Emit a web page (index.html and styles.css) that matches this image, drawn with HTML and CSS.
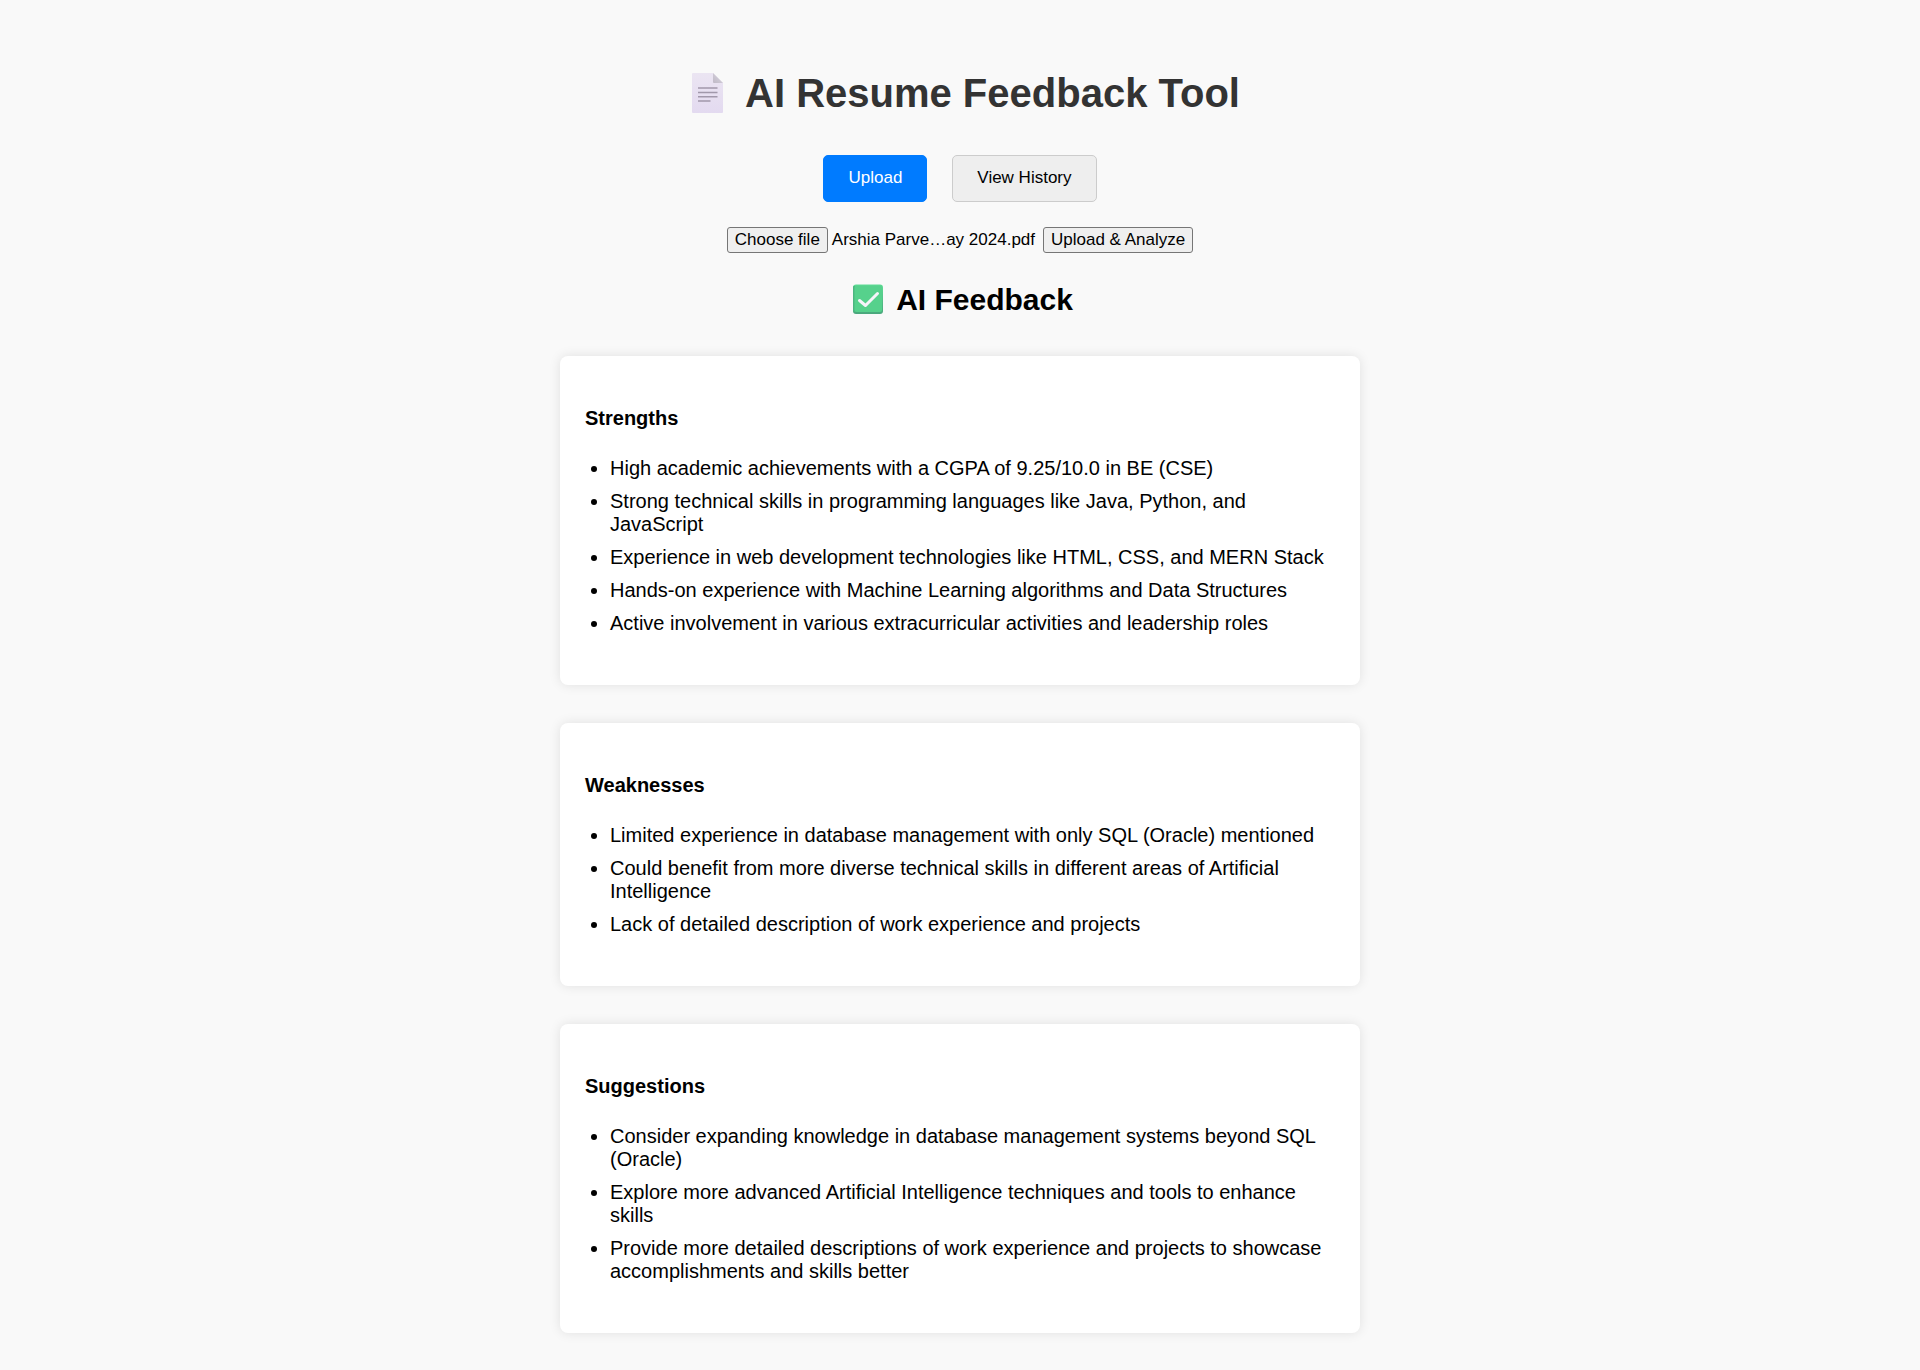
FILE: index.html
```html
<!DOCTYPE html>
<html lang="en">
<head>
  <meta charset="utf-8">
  <meta name="viewport" content="width=device-width, initial-scale=1">
  <title>AI Resume Feedback Tool</title>
  <link rel="stylesheet" href="styles.css">
</head>
<body>
  <main class="page">
    <h1 class="title">
      <svg class="title-icon" viewBox="0 0 55 40" aria-hidden="true">
        <defs>
          <linearGradient id="paper" x1="0" y1="0" x2="0" y2="1">
            <stop offset="0" stop-color="#ebe5f2"/>
            <stop offset="1" stop-color="#e3daf0"/>
          </linearGradient>
          <linearGradient id="fold" x1="0" y1="1" x2="1" y2="0">
            <stop offset="0" stop-color="#bfb9c6"/>
            <stop offset="1" stop-color="#dcd7e2"/>
          </linearGradient>
        </defs>
        <path d="M13 0H33L43 10V39a1 1 0 0 1-1 1H13a1 1 0 0 1-1-1V1a1 1 0 0 1 1-1Z" fill="url(#paper)"/>
        <path d="M33 0L43 10H34a1 1 0 0 1-1-1Z" fill="url(#fold)"/>
        <path d="M18 15H37.500M18 19.500H37.500M18 23.800H37.500M18 28H30.500" stroke="#a198ab" stroke-width="1.500" fill="none"/>
      </svg>
      AI Resume Feedback Tool
    </h1>

    <nav class="tabs">
      <button class="tab tab-active" type="button">Upload</button>
      <button class="tab" type="button">View History</button>
    </nav>

    <form class="upload">
      <input class="file-input" id="resume" type="file" accept=".pdf" aria-label="Resume" tabindex="-1">
      <button class="control" type="button" onclick="document.getElementById('resume').click()">Choose file</button>
      <span class="file-name">Arshia Parve…ay 2024.pdf</span>
      <button class="control" type="button">Upload &amp; Analyze</button>
    </form>

    <h2 class="subtitle">
      <svg class="subtitle-icon" viewBox="0 0 41 32" aria-hidden="true">
        <defs>
          <linearGradient id="tick-edge" x1="0" y1="0" x2="0" y2="1">
            <stop offset="0" stop-color="#5fdd95"/>
            <stop offset="1" stop-color="#4aa77c"/>
          </linearGradient>
        </defs>
        <rect x="6" y="0.500" width="30" height="29.500" rx="3" fill="url(#tick-edge)"/>
        <rect x="6" y="2" width="3" height="26" rx="1" fill="#4cb681"/>
        <rect x="7.500" y="1.500" width="27.500" height="26.500" rx="2" fill="#56d18c"/>
        <path d="M12.500 16.500L18.500 21.500L30.500 9.500" fill="none" stroke="#f6f4fa" stroke-width="3" stroke-linecap="round" stroke-linejoin="round"/>
      </svg>
      AI Feedback
    </h2>

    <div class="cards">
      <section class="card">
        <h4 class="card-title">Strengths</h4>
        <ul class="points">
          <li>High academic achievements with a CGPA of 9.25/10.0 in BE (CSE)</li>
          <li>Strong technical skills in programming languages like Java, Python, and JavaScript</li>
          <li>Experience in web development technologies like HTML, CSS, and MERN Stack</li>
          <li>Hands-on experience with Machine Learning algorithms and Data Structures</li>
          <li>Active involvement in various extracurricular activities and leadership roles</li>
        </ul>
      </section>

      <section class="card">
        <h4 class="card-title">Weaknesses</h4>
        <ul class="points">
          <li>Limited experience in database management with only SQL (Oracle) mentioned</li>
          <li>Could benefit from more diverse technical skills in different areas of Artificial Intelligence</li>
          <li>Lack of detailed description of work experience and projects</li>
        </ul>
      </section>

      <section class="card">
        <h4 class="card-title">Suggestions</h4>
        <ul class="points">
          <li>Consider expanding knowledge in database management systems beyond SQL (Oracle)</li>
          <li>Explore more advanced Artificial Intelligence techniques and tools to enhance skills</li>
          <li>Provide more detailed descriptions of work experience and projects to showcase accomplishments and skills better</li>
        </ul>
      </section>
    </div>
  </main>
</body>
</html>
```
FILE: styles.css
```css
* {
  box-sizing: border-box;
}

body {
  margin: 0;
  background: #f9f9f9;
  color: #000;
  font-family: "Liberation Sans", Arial, sans-serif;
  font-size: 20px;
  line-height: 23px;
}

.page {
  max-width: 800px;
  margin: 0 auto;
  padding: 70px 0 37px;
}

.title,
.subtitle {
  display: flex;
  justify-content: center;
  align-items: center;
  margin: 0;
}

.title {
  gap: 10px;
  color: #333;
  font-size: 40px;
  line-height: 46px;
}

.title-icon {
  width: 55px;
  height: 40px;
}

.tabs {
  display: flex;
  justify-content: center;
  gap: 25px;
  margin-top: 39px;
}

.tab {
  padding: 12px 24px 14px;
  border: 1px solid #ccc;
  border-radius: 5px;
  background: #eee;
  color: #000;
  font: 17px/19px "Liberation Sans", Arial, sans-serif;
  cursor: pointer;
}

.tab-active {
  border-color: #007bff;
  background: #007bff;
  color: #fff;
}

.upload {
  display: flex;
  justify-content: center;
  align-items: center;
  margin-top: 25px;
  font-size: 17px;
  line-height: 20px;
}

.file-input {
  position: absolute;
  width: 1px;
  height: 1px;
  opacity: 0;
  pointer-events: none;
}

.file-name {
  margin: 0 8px 0 4px;
}

.control {
  padding: 2px 7px;
  border: 1px solid #767676;
  border-radius: 3px;
  background: #efefef;
  color: #000;
  font: 17px/20px "Liberation Sans", Arial, sans-serif;
}

.subtitle {
  gap: 8px;
  margin-top: 30px;
  font-size: 30px;
  line-height: 34px;
}

.subtitle-icon {
  width: 41px;
  height: 32px;
}

.cards {
  display: grid;
  gap: 38px;
  margin-top: 39px;
}

.card {
  padding: 25px;
  border-radius: 8px;
  background: #fff;
  box-shadow: 0 0 12px rgba(0, 0, 0, 0.1);
}

.card-title {
  margin: 26px 0 27px;
  font-size: 20px;
}

.points {
  margin: 0 0 25px;
  padding-left: 25px;
}

.points li + li {
  margin-top: 10px;
}
```
